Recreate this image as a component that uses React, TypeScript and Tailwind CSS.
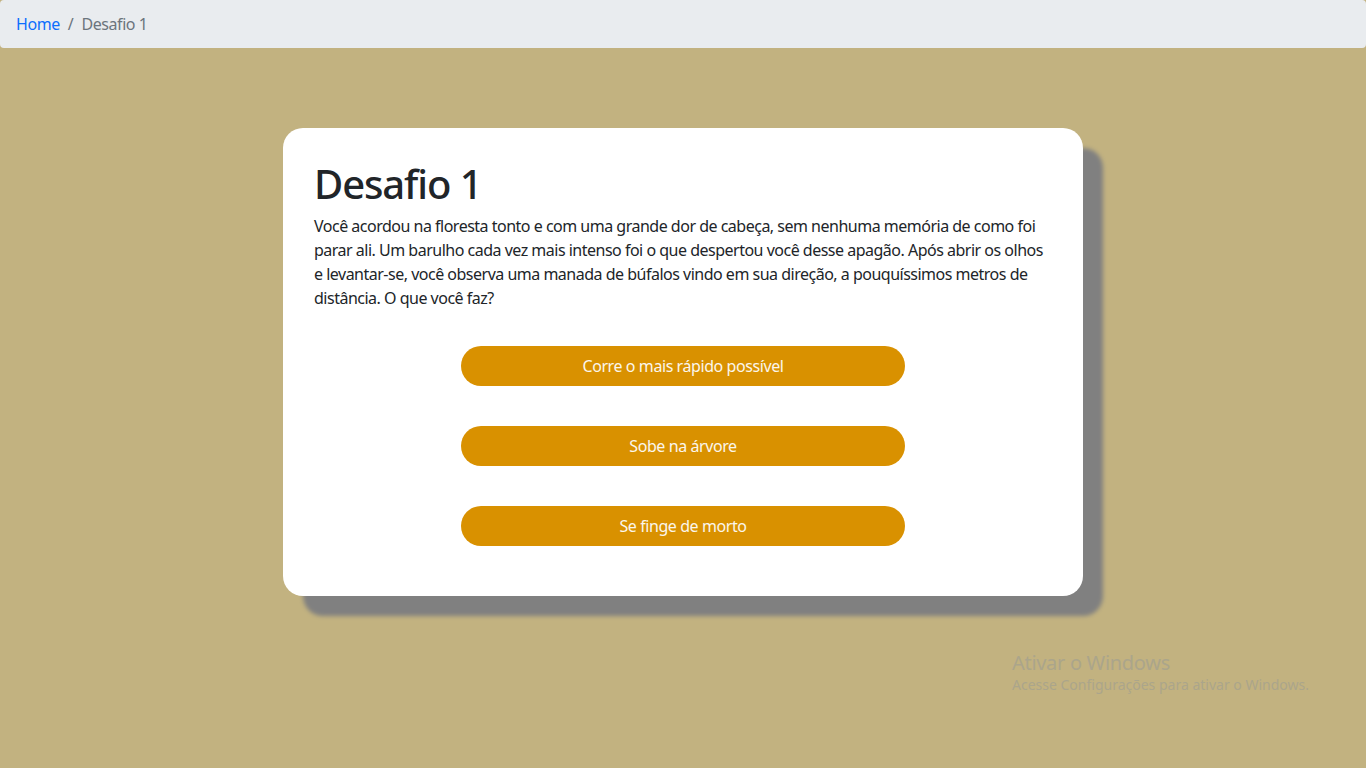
import React from "react";

const choices = ["Corre o mais rápido possível", "Sobe na árvore", "Se finge de morto"];

export default function App() {
  return (
    <div className="relative min-h-[768px] bg-[#c2b280] font-['Noto_Sans',sans-serif] tracking-[-0.42px] text-[#212529]">
      <nav className="rounded-[4px] bg-[#e9ecef] px-4 py-3 text-base leading-6">
        <ol className="flex items-center">
          <li className="text-[#0d6efd]">Home</li>
          <li className="px-2 text-[#6c757d]">/</li>
          <li className="text-[#6c757d]">Desafio 1</li>
        </ol>
      </nav>

      <main className="flex justify-center pt-[80px]">
        <section className="w-[800px] rounded-[20px] bg-white pl-[31px] pr-8 pb-[30px] pt-8 shadow-[20px_20px_4px_#808080]">
          <h1 className="mb-[6px] text-[40px] font-medium leading-[48px] tracking-[-1.1px]">Desafio 1</h1>
          <p className="mb-4 text-base leading-6 tracking-[-0.5px]">
            Você acordou na floresta tonto e com uma grande dor de cabeça, sem nenhuma memória de como foi
            parar ali. Um barulho cada vez mais intenso foi o que despertou você desse apagão. Após abrir os
            olhos e levantar-se, você observa uma manada de búfalos vindo em sua direção, a pouquíssimos
            metros de distância. O que você faz?
          </p>
          <div className="flex flex-col items-center gap-10 py-5 pl-px">
            {choices.map((c) => (
              <button
                key={c}
                className="h-10 w-[444px] rounded-full bg-[#d99100] text-base text-[#fbf6ec]"
              >
                {c}
              </button>
            ))}
          </div>
        </section>
      </main>

      <div className="pointer-events-none absolute left-[1012px] top-[651px] tracking-normal text-[#aba58b]">
        <p className="text-[20px] leading-6 tracking-[-0.3px]">Ativar o Windows</p>
        <p className="text-[14px] leading-5">Acesse Configurações para ativar o Windows.</p>
      </div>
    </div>
  );
}
